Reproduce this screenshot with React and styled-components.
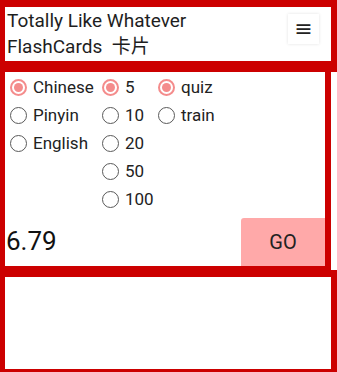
import React, { useState } from "react";
import styled, { createGlobalStyle } from "styled-components";

const GlobalStyle = createGlobalStyle`
  html, body {
    margin: 0;
    padding: 0;
    overflow: hidden;
    background: #cc0000;
  }
  body {
    font-family: Roboto, "Noto Sans CJK SC", "Noto Sans", sans-serif;
    color: #222;
  }
`;

const Page = styled.div`
  padding: 7px 0 0 5px;
  width: 337px;
  height: 372px;
  box-sizing: border-box;
`;

const Header = styled.div`
  width: 326px;
  height: 54px;
  background: #fff;
  display: flex;
  justify-content: space-between;
  align-items: flex-start;
  box-sizing: border-box;
  padding: 1px 12px 0 2px;
`;

const Title = styled.div`
  font-size: 19px;
  line-height: 26px;
  color: #1e1e1e;
`;

const MenuButton = styled.button`
  margin-top: 6px;
  width: 31px;
  height: 30px;
  border: none;
  background: #fff;
  box-shadow: 0 0 3px rgba(0, 0, 0, 0.12);
  font-family: "DejaVu Sans", sans-serif;
  font-size: 22px;
  line-height: 30px;
  color: #222;
  padding: 0;
`;

const Row = styled.div`
  display: flex;
  gap: 6px;
  margin-top: 11px;
  align-items: flex-start;
`;

const Panel = styled.div`
  flex-shrink: 0;
  width: 320px;
  height: 194px;
  background: #fff;
  box-sizing: border-box;
  padding: 1px 0 0 0;
  display: flex;
  flex-direction: column;
`;

const Side = styled.div`
  flex-shrink: 0;
  width: 6px;
  height: 198px;
  background: #fff;
`;

const Options = styled.div`
  display: flex;
  padding-left: 5px;
  height: 140px;
`;

const Column = styled.div`
  width: ${(p) => p.$w}px;
  display: flex;
  flex-direction: column;
`;

const Choice = styled.label`
  display: flex;
  align-items: center;
  height: 28px;
  font-size: 17px;
  line-height: 28px;
  color: #222;
  gap: 6px;
  cursor: pointer;
`;

const Circle = styled.span`
  width: 17px;
  height: 17px;
  box-sizing: border-box;
  border-radius: 50%;
  border: ${(p) => (p.$on ? "2px solid #f48c8c" : "1.5px solid #5a5a5a")};
  display: flex;
  align-items: center;
  justify-content: center;
  &::after {
    content: "";
    width: 9px;
    height: 9px;
    border-radius: 50%;
    background: ${(p) => (p.$on ? "#f48c8c" : "transparent")};
  }
`;

const Bottom = styled.div`
  margin-top: 5px;
  height: 48px;
  display: flex;
  justify-content: space-between;
  align-items: center;
  padding-left: 1px;
`;

const Score = styled.div`
  font-size: 26px;
  font-weight: 400;
  color: #111;
  margin-top: -3px;
`;

const GoButton = styled.button`
  width: 84px;
  height: 48px;
  border: none;
  border-radius: 3px 0 0 0;
  background: #ffa9a9;
  font-family: Roboto, sans-serif;
  font-size: 20px;
  font-weight: 400;
  color: #222;
`;

const Lower = styled.div`
  margin-top: 7px;
  width: 326px;
  height: 92px;
  background: #fff;
`;

function Group({ items, value, onChange, width }) {
  return (
    <Column $w={width}>
      {items.map((item) => (
        <Choice key={item} onClick={() => onChange(item)}>
          <Circle $on={value === item} />
          {item}
        </Choice>
      ))}
    </Column>
  );
}

export default function App() {
  const [lang, setLang] = useState("Chinese");
  const [count, setCount] = useState("5");
  const [mode, setMode] = useState("quiz");

  return (
    <>
      <GlobalStyle />
      <Page>
        <Header>
          <Title>
            Totally Like Whatever
            <br />
            FlashCards&nbsp; 卡片
          </Title>
          <MenuButton>≡</MenuButton>
        </Header>
        <Row>
          <Panel>
            <Options>
              <Group
                width={92}
                items={["Chinese", "Pinyin", "English"]}
                value={lang}
                onChange={setLang}
              />
              <Group
                width={56}
                items={["5", "10", "20", "50", "100"]}
                value={count}
                onChange={setCount}
              />
              <Group
                width={100}
                items={["quiz", "train"]}
                value={mode}
                onChange={setMode}
              />
            </Options>
            <Bottom>
              <Score>6.79</Score>
              <GoButton>GO</GoButton>
            </Bottom>
          </Panel>
          <Side />
        </Row>
        <Lower />
      </Page>
    </>
  );
}
